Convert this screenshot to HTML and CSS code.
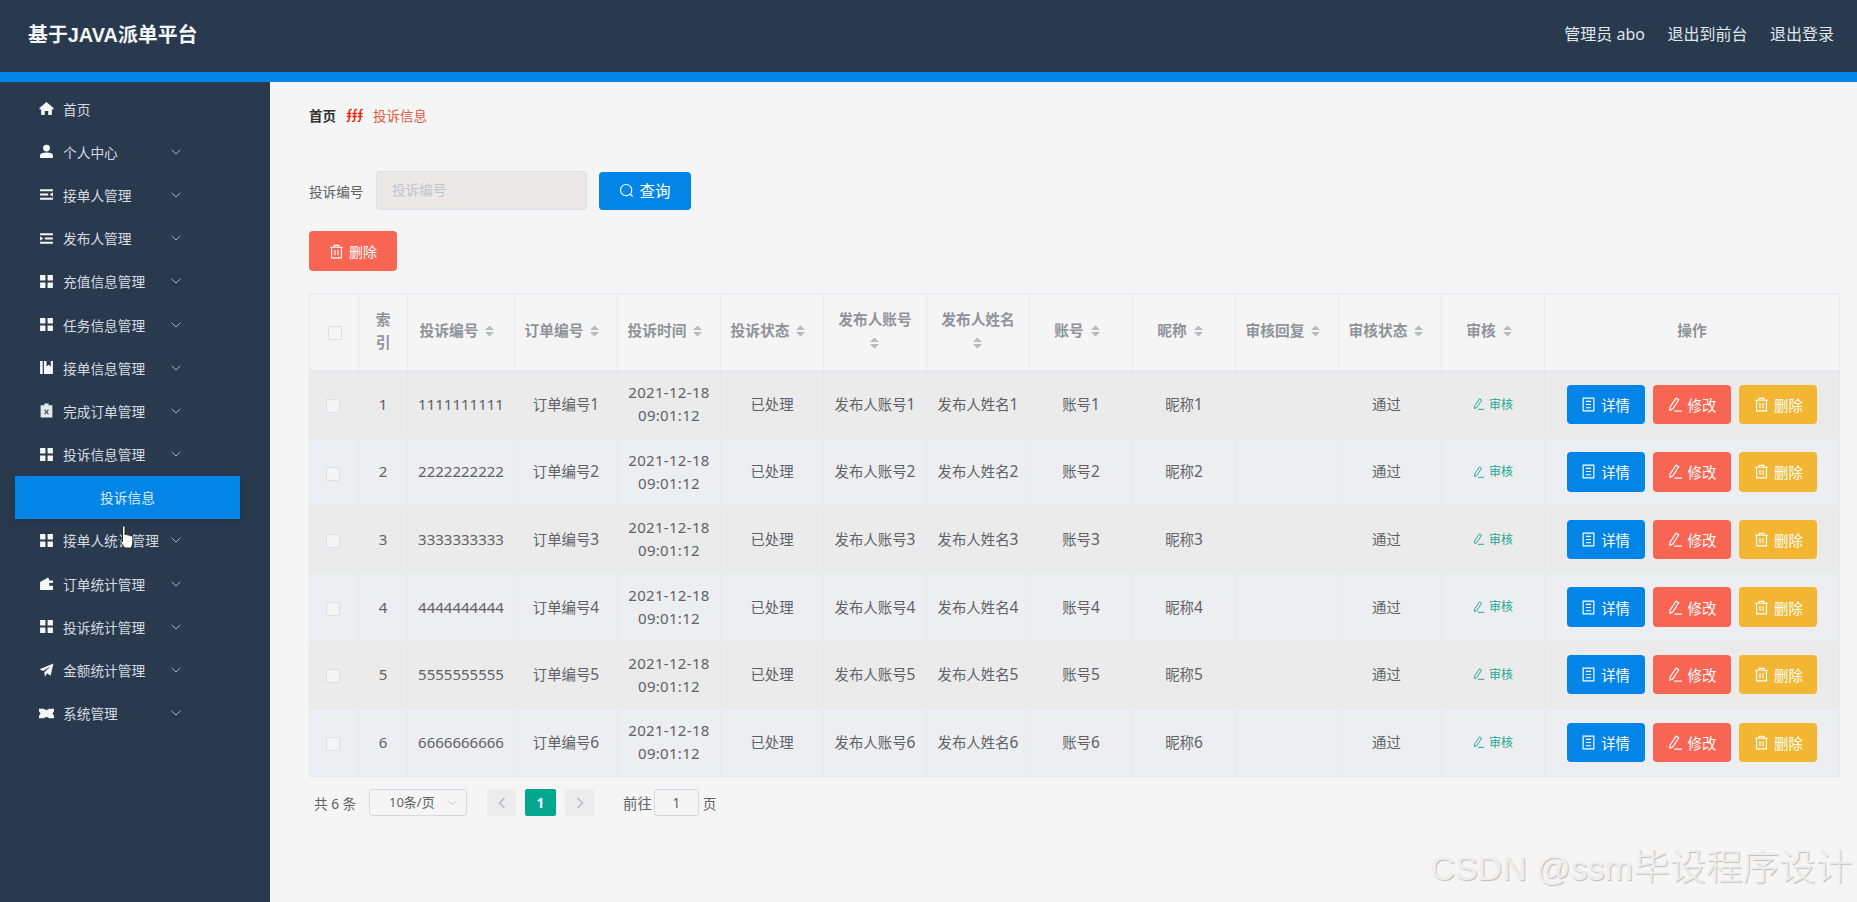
FILE: index.html
```html
<!DOCTYPE html>
<html lang="zh-CN">

<head>
    <meta charset="UTF-8">
    <title>基于JAVA派单平台</title>
    <link rel="stylesheet" href="styles.css">
</head>

<body>
    <svg class="sprites" xmlns="http://www.w3.org/2000/svg">
        <symbol id="i-home" viewBox="0 0 14 14"><path d="M7 1 L13.5 6.6 V8 H12 V13 H8.6 V9.4 H5.4 V13 H2 V8 H0.5 V6.6 Z" fill="currentColor"/></symbol>
        <symbol id="i-user" viewBox="0 0 14 14"><circle cx="7" cy="3.8" r="3.2" fill="currentColor"/><path d="M1 13 V10.6 C1 8.8 3 8 7 8 C11 8 13 8.8 13 10.6 V13 Z" fill="currentColor"/></symbol>
        <symbol id="i-indent" viewBox="0 0 14 14"><path d="M1 2 H13 V4 H1 Z M1 6 H8.6 V8 H1 Z M1 10 H13 V12 H1 Z M13 5 V9 L10 7 Z" fill="currentColor"/></symbol>
        <symbol id="i-outdent" viewBox="0 0 14 14"><path d="M1 2 H13 V4 H1 Z M5.4 6 H13 V8 H5.4 Z M1 10 H13 V12 H1 Z M1 5 V9 L4 7 Z" fill="currentColor"/></symbol>
        <symbol id="i-grid" viewBox="0 0 14 14"><path d="M1 1 H6 V6 H1 Z M8 1 H13 V6 H8 Z M1 8 H6 V13 H1 Z M8 8 H13 V13 H8 Z" fill="currentColor"/></symbol>
        <symbol id="i-book" viewBox="0 0 14 14"><path d="M1 1 H3.5 V13 H1 Z M4.6 1 H7 V6 L9 4.5 L11 6 V1 H13 V13 H4.6 Z" fill="currentColor"/></symbol>
        <symbol id="i-clip" viewBox="0 0 14 14"><path d="M5 0.5 H9 V2 H12.5 V13.5 H1.5 V2 H5 Z" fill="#dfe8ea"/><path d="M5.2 6.2 L8.8 10.4 M8.8 6.2 L5.2 10.4" stroke="#45596b" stroke-width="1.2"/></symbol>
        <symbol id="i-wallet" viewBox="0 0 14 14"><path d="M1 5.5 L8.5 1.5 L10 4.2 H13 V6.6 H9.5 V9 H13 V13 H1 Z" fill="currentColor"/></symbol>
        <symbol id="i-plane" viewBox="0 0 14 14"><path d="M13.5 0.5 L10.8 12 L7.4 9.6 L5.6 13 L5 8.6 L11 3 L3.8 7.4 L0.5 5.8 Z" fill="currentColor"/></symbol>
        <symbol id="i-ticket" viewBox="0 0 14 14"><path d="M0 2.5 H4.4 L7 4 L9.6 2.5 H14 V5 L12.6 7 L14 9 V11.5 H9.6 L7 10 L4.4 11.5 H0 V9 L1.4 7 L0 5 Z" fill="currentColor"/></symbol>
        <symbol id="i-chevron" viewBox="0 0 10 6"><path d="M0.6 0.8 L5 5 L9.4 0.8" fill="none" stroke="currentColor" stroke-width="1"/></symbol>
        <symbol id="i-search" viewBox="0 0 16 16"><circle cx="7.6" cy="7.6" r="6" fill="none" stroke="currentColor" stroke-width="1.2"/><path d="M12 12 L14.6 14.6" stroke="currentColor" stroke-width="1.2"/></symbol>
        <symbol id="i-trash" viewBox="0 0 14 14"><path d="M1 3 H13 M4.8 3 V1.2 H9.2 V3 M2.4 3 V13 H11.6 V3 M5.6 5.5 V10.5 M8.4 5.5 V10.5" fill="none" stroke="currentColor" stroke-width="1.1"/></symbol>
        <symbol id="i-doc" viewBox="0 0 14 14"><path d="M2 1 H12 V13 H2 Z M4.6 4 H9.4 M4.6 7 H9.4 M4.6 10 H9.4" fill="none" stroke="currentColor" stroke-width="1.1"/></symbol>
        <symbol id="i-edit" viewBox="0 0 14 14"><path d="M7.6 1 L10 2.6 L4.6 11 L1.8 12.4 L2 9.2 Z M5.8 13.2 H13" fill="none" stroke="currentColor" stroke-width="1.1"/></symbol>
        <symbol id="i-sort" viewBox="0 0 9 12"><path d="M4.5 0.5 L9 5 H0 Z M0 7 H9 L4.5 11.5 Z" fill="currentColor"/></symbol>
        <symbol id="i-prev" viewBox="0 0 8 12"><path d="M6.5 1 L1.5 6 L6.5 11" fill="none" stroke="currentColor" stroke-width="1.6"/></symbol>
        <symbol id="i-next" viewBox="0 0 8 12"><path d="M1.5 1 L6.5 6 L1.5 11" fill="none" stroke="currentColor" stroke-width="1.6"/></symbol>
    </svg>

    <header class="topbar">
        <div class="brand">基于JAVA派单平台</div>
        <nav class="topnav">
            <span>管理员 abo</span>
            <span>退出到前台</span>
            <span>退出登录</span>
        </nav>
    </header>

    <div class="layout">
        <aside class="sidebar">
            <div class="menu-item"><svg class="menu-icon"><use href="#i-home"/></svg><span>首页</span></div>
            <div class="menu-item"><svg class="menu-icon"><use href="#i-user"/></svg><span>个人中心</span><svg class="chevron"><use href="#i-chevron"/></svg></div>
            <div class="menu-item"><svg class="menu-icon"><use href="#i-indent"/></svg><span>接单人管理</span><svg class="chevron"><use href="#i-chevron"/></svg></div>
            <div class="menu-item"><svg class="menu-icon"><use href="#i-outdent"/></svg><span>发布人管理</span><svg class="chevron"><use href="#i-chevron"/></svg></div>
            <div class="menu-item"><svg class="menu-icon"><use href="#i-grid"/></svg><span>充值信息管理</span><svg class="chevron"><use href="#i-chevron"/></svg></div>
            <div class="menu-item"><svg class="menu-icon"><use href="#i-grid"/></svg><span>任务信息管理</span><svg class="chevron"><use href="#i-chevron"/></svg></div>
            <div class="menu-item"><svg class="menu-icon"><use href="#i-book"/></svg><span>接单信息管理</span><svg class="chevron"><use href="#i-chevron"/></svg></div>
            <div class="menu-item"><svg class="menu-icon"><use href="#i-clip"/></svg><span>完成订单管理</span><svg class="chevron"><use href="#i-chevron"/></svg></div>
            <div class="menu-item"><svg class="menu-icon"><use href="#i-grid"/></svg><span>投诉信息管理</span><svg class="chevron"><use href="#i-chevron"/></svg></div>
            <div class="submenu-item">投诉信息</div>
            <div class="menu-item"><svg class="menu-icon"><use href="#i-grid"/></svg><span>接单人统计管理</span><svg class="chevron"><use href="#i-chevron"/></svg></div>
            <div class="menu-item"><svg class="menu-icon"><use href="#i-wallet"/></svg><span>订单统计管理</span><svg class="chevron"><use href="#i-chevron"/></svg></div>
            <div class="menu-item"><svg class="menu-icon"><use href="#i-grid"/></svg><span>投诉统计管理</span><svg class="chevron"><use href="#i-chevron"/></svg></div>
            <div class="menu-item"><svg class="menu-icon"><use href="#i-plane"/></svg><span>金额统计管理</span><svg class="chevron"><use href="#i-chevron"/></svg></div>
            <div class="menu-item"><svg class="menu-icon"><use href="#i-ticket"/></svg><span>系统管理</span><svg class="chevron"><use href="#i-chevron"/></svg></div>
        </aside>

        <main class="content">
            <div class="breadcrumb">
                <b>首页</b>
                <svg class="crumb-sep" viewBox="0 0 18 15"><path d="M5.6 2 C4.4 0.6 3.2 2 3.2 4 V10 C3.2 12.8 2 14.4 0.8 13 M0.8 5.6 H5.4 M0.8 8.4 H5.4 M11 2 C9.8 0.6 8.6 2 8.6 4 V10 C8.6 12.8 7.4 14.4 6.2 13 M6.2 5.6 H10.8 M6.2 8.4 H10.8 M16.6 2 C15.4 0.6 14.2 2 14.2 4 V10 C14.2 12.8 13 14.4 11.8 13 M11.8 5.6 H16.6 M11.8 8.4 H16.6"/></svg>
                <span class="crumb-current">投诉信息</span>
            </div>

            <div class="search-row">
                <label class="search-label">投诉编号</label>
                <div class="search-input">投诉编号</div>
                <button class="btn btn-search"><svg class="btn-icon"><use href="#i-search"/></svg>查询</button>
            </div>

            <div class="action-row">
                <button class="btn btn-delete-all"><svg class="btn-icon"><use href="#i-trash"/></svg>删除</button>
            </div>

            <table class="grid">
                <colgroup>
                    <col class="col-narrow"><col class="col-narrow"><col class="col-code">
                    <col class="col-std"><col class="col-std"><col class="col-std"><col class="col-std"><col class="col-std">
                    <col class="col-std"><col class="col-std"><col class="col-std"><col class="col-std"><col class="col-std">
                    <col class="col-ops">
                </colgroup>
                <thead>
                    <tr>
                        <th><span class="check"></span></th>
                        <th>索<br>引</th>
                        <th>投诉编号<svg class="sort"><use href="#i-sort"/></svg></th>
                        <th>订单编号<svg class="sort"><use href="#i-sort"/></svg></th>
                        <th>投诉时间<svg class="sort"><use href="#i-sort"/></svg></th>
                        <th>投诉状态<svg class="sort"><use href="#i-sort"/></svg></th>
                        <th>发布人账号<svg class="sort"><use href="#i-sort"/></svg></th>
                        <th>发布人姓名<svg class="sort"><use href="#i-sort"/></svg></th>
                        <th>账号<svg class="sort"><use href="#i-sort"/></svg></th>
                        <th>昵称<svg class="sort"><use href="#i-sort"/></svg></th>
                        <th>审核回复<svg class="sort"><use href="#i-sort"/></svg></th>
                        <th>审核状态<svg class="sort"><use href="#i-sort"/></svg></th>
                        <th>审核<svg class="sort"><use href="#i-sort"/></svg></th>
                        <th>操作</th>
                    </tr>
                </thead>
                <tbody>
                    <tr>
                        <td><span class="check"></span></td><td class="num">1</td><td class="num">1111111111</td><td>订单编号<span class="digit">1</span></td><td class="num date">2021-12-18<br>09:01:12</td><td>已处理</td><td>发布人账号<span class="digit">1</span></td><td>发布人姓名<span class="digit">1</span></td><td>账号<span class="digit">1</span></td><td>昵称<span class="digit">1</span></td><td></td><td class="status">通过</td>
                        <td><span class="review"><svg class="review-icon"><use href="#i-edit"/></svg>审核</span></td>
                        <td><div class="ops"><button class="btn btn-op btn-detail"><svg class="btn-icon"><use href="#i-doc"/></svg>详情</button><button class="btn btn-op btn-edit"><svg class="btn-icon"><use href="#i-edit"/></svg>修改</button><button class="btn btn-op btn-remove"><svg class="btn-icon"><use href="#i-trash"/></svg>删除</button></div></td>
                    </tr>
                    <tr>
                        <td><span class="check"></span></td><td class="num">2</td><td class="num">2222222222</td><td>订单编号<span class="digit">2</span></td><td class="num date">2021-12-18<br>09:01:12</td><td>已处理</td><td>发布人账号<span class="digit">2</span></td><td>发布人姓名<span class="digit">2</span></td><td>账号<span class="digit">2</span></td><td>昵称<span class="digit">2</span></td><td></td><td class="status">通过</td>
                        <td><span class="review"><svg class="review-icon"><use href="#i-edit"/></svg>审核</span></td>
                        <td><div class="ops"><button class="btn btn-op btn-detail"><svg class="btn-icon"><use href="#i-doc"/></svg>详情</button><button class="btn btn-op btn-edit"><svg class="btn-icon"><use href="#i-edit"/></svg>修改</button><button class="btn btn-op btn-remove"><svg class="btn-icon"><use href="#i-trash"/></svg>删除</button></div></td>
                    </tr>
                    <tr>
                        <td><span class="check"></span></td><td class="num">3</td><td class="num">3333333333</td><td>订单编号<span class="digit">3</span></td><td class="num date">2021-12-18<br>09:01:12</td><td>已处理</td><td>发布人账号<span class="digit">3</span></td><td>发布人姓名<span class="digit">3</span></td><td>账号<span class="digit">3</span></td><td>昵称<span class="digit">3</span></td><td></td><td class="status">通过</td>
                        <td><span class="review"><svg class="review-icon"><use href="#i-edit"/></svg>审核</span></td>
                        <td><div class="ops"><button class="btn btn-op btn-detail"><svg class="btn-icon"><use href="#i-doc"/></svg>详情</button><button class="btn btn-op btn-edit"><svg class="btn-icon"><use href="#i-edit"/></svg>修改</button><button class="btn btn-op btn-remove"><svg class="btn-icon"><use href="#i-trash"/></svg>删除</button></div></td>
                    </tr>
                    <tr>
                        <td><span class="check"></span></td><td class="num">4</td><td class="num">4444444444</td><td>订单编号<span class="digit">4</span></td><td class="num date">2021-12-18<br>09:01:12</td><td>已处理</td><td>发布人账号<span class="digit">4</span></td><td>发布人姓名<span class="digit">4</span></td><td>账号<span class="digit">4</span></td><td>昵称<span class="digit">4</span></td><td></td><td class="status">通过</td>
                        <td><span class="review"><svg class="review-icon"><use href="#i-edit"/></svg>审核</span></td>
                        <td><div class="ops"><button class="btn btn-op btn-detail"><svg class="btn-icon"><use href="#i-doc"/></svg>详情</button><button class="btn btn-op btn-edit"><svg class="btn-icon"><use href="#i-edit"/></svg>修改</button><button class="btn btn-op btn-remove"><svg class="btn-icon"><use href="#i-trash"/></svg>删除</button></div></td>
                    </tr>
                    <tr>
                        <td><span class="check"></span></td><td class="num">5</td><td class="num">5555555555</td><td>订单编号<span class="digit">5</span></td><td class="num date">2021-12-18<br>09:01:12</td><td>已处理</td><td>发布人账号<span class="digit">5</span></td><td>发布人姓名<span class="digit">5</span></td><td>账号<span class="digit">5</span></td><td>昵称<span class="digit">5</span></td><td></td><td class="status">通过</td>
                        <td><span class="review"><svg class="review-icon"><use href="#i-edit"/></svg>审核</span></td>
                        <td><div class="ops"><button class="btn btn-op btn-detail"><svg class="btn-icon"><use href="#i-doc"/></svg>详情</button><button class="btn btn-op btn-edit"><svg class="btn-icon"><use href="#i-edit"/></svg>修改</button><button class="btn btn-op btn-remove"><svg class="btn-icon"><use href="#i-trash"/></svg>删除</button></div></td>
                    </tr>
                    <tr>
                        <td><span class="check"></span></td><td class="num">6</td><td class="num">6666666666</td><td>订单编号<span class="digit">6</span></td><td class="num date">2021-12-18<br>09:01:12</td><td>已处理</td><td>发布人账号<span class="digit">6</span></td><td>发布人姓名<span class="digit">6</span></td><td>账号<span class="digit">6</span></td><td>昵称<span class="digit">6</span></td><td></td><td class="status">通过</td>
                        <td><span class="review"><svg class="review-icon"><use href="#i-edit"/></svg>审核</span></td>
                        <td><div class="ops"><button class="btn btn-op btn-detail"><svg class="btn-icon"><use href="#i-doc"/></svg>详情</button><button class="btn btn-op btn-edit"><svg class="btn-icon"><use href="#i-edit"/></svg>修改</button><button class="btn btn-op btn-remove"><svg class="btn-icon"><use href="#i-trash"/></svg>删除</button></div></td>
                    </tr>
                </tbody>
            </table>

            <div class="pager">
                <span class="pager-total">共 6 条</span>
                <div class="pager-size">10条/页<svg class="pager-caret"><use href="#i-chevron"/></svg></div>
                <span class="pager-btn"><svg class="pager-arrow"><use href="#i-prev"/></svg></span>
                <span class="pager-num">1</span>
                <span class="pager-btn"><svg class="pager-arrow"><use href="#i-next"/></svg></span>
                <span class="pager-goto">前往</span>
                <div class="pager-input">1</div>
                <span class="pager-unit">页</span>
            </div>
        </main>
    </div>

    <svg class="hand-cursor" viewBox="0 0 15 24"><path d="M1 14 L3.5 17 V2 C3.5 0.6 6 0.6 6 2 V10 C6.8 9 8.4 9.2 8.8 10.4 C9.6 9.6 10.9 9.8 11.2 10.9 C12.2 10.3 13.6 10.8 13.8 12.2 V18 L12.4 23 H5.6 L1.2 16.4 C0.6 15.4 0.4 14.4 1 14 Z" fill="#fff" stroke="#1c1c1c" stroke-width="0.9"/></svg>
    <div class="watermark">CSDN @ssm<span class="watermark-cjk">毕设程序设计</span></div>
</body>

</html>
```

FILE: styles.css
```css
* {
    box-sizing: border-box;
}

body {
    margin: 0;
    height: 902px;
    overflow: hidden;
    background: #f5f5f5;
    font-family: "Noto Sans", "Noto Sans CJK SC", sans-serif;
    font-size: 14px;
    color: #606266;
}

.sprites {
    display: none;
}

/* top */
.topbar {
    display: flex;
    justify-content: space-between;
    align-items: center;
    height: 82px;
    padding: 0 23px 7px 28px;
    background: #293a4f;
    border-bottom: 10px solid #0385e8;
    color: #dfe6ec;
}

.brand {
    margin-top: 2px;
    font-family: "Liberation Sans", "Noto Sans CJK SC", sans-serif;
    font-size: 19.9px;
    font-weight: 700;
    color: #f5f7f8;
}

.topnav {
    display: flex;
    gap: 22.5px;
    font-size: 16px;
}

/* side menu */
.layout {
    display: flex;
    height: 820px;
}

.sidebar {
    width: 270px;
    flex: none;
    padding-top: 5px;
    background: #293a4f;
    color: #d5dbe0;
    font-size: 13.7px;
}

.menu-item {
    display: flex;
    align-items: center;
    height: 43.2px;
    padding-left: 39px;
}

.menu-icon {
    width: 15px;
    height: 15px;
    margin-right: 9px;
    color: #f4f6f7;
}

.chevron {
    position: absolute;
    left: 171px;
    width: 10px;
    height: 6px;
    color: #a9b3bd;
}

.submenu-item {
    width: 225px;
    height: 43.2px;
    margin-left: 15px;
    line-height: 43px;
    text-align: center;
    background: #0385e8;
    color: #dbeaf6;
    box-shadow: 0 2px 8px rgba(0, 0, 0, 0.15);
}

/* content */
.content {
    flex: 1;
    padding: 0 18px 0 39px;
}

.breadcrumb {
    display: flex;
    align-items: center;
    height: 20px;
    margin-top: 23px;
    font-size: 13.5px;
    color: #303133;
}

.crumb-sep {
    width: 18px;
    height: 15px;
    margin: 0 9px 0 10px;
    fill: none;
    stroke: #e8261a;
    stroke-width: 1.5;
}

.crumb-current {
    color: #dc5b42;
}

.search-row {
    display: flex;
    align-items: center;
    height: 39px;
    margin-top: 46px;
}

.search-label {
    width: 67px;
    font-size: 13.6px;
}

.search-input {
    width: 211px;
    height: 39px;
    padding-left: 15px;
    line-height: 36px;
    font-size: 13.6px;
    color: #c0c4cc;
    background: #ece8e8;
    border: 1px solid #dcdfe6;
    border-radius: 4px;
}

.btn {
    display: inline-flex;
    justify-content: center;
    align-items: center;
    padding: 0;
    font-family: inherit;
    color: #fff;
    border: 0;
    border-radius: 4px;
}

.btn-icon {
    width: 15px;
    height: 15px;
    margin-right: 5px;
}

.btn-search {
    align-self: flex-end;
    width: 92px;
    height: 38px;
    margin-left: 12px;
    padding-bottom: 2px;
    font-size: 15.5px;
    background: #0385e8;
}

.action-row {
    margin-top: 21px;
}

.btn-delete-all {
    width: 88px;
    height: 40px;
    font-size: 14px;
    background: #f86553;
}

/* table */
.grid {
    width: 1530px;
    margin-top: 22px;
    table-layout: fixed;
    border-collapse: collapse;
    text-align: center;
}

.col-narrow {
    width: 49px;
}

.col-code {
    width: 107px;
}

.col-std {
    width: 103px;
}

.col-ops {
    width: 295px;
}

.grid th,
.grid td {
    padding: 0 8px;
    border: 1px solid #e6e8ee;
}

.grid th {
    height: 77px;
    padding-bottom: 3px;
    font-weight: 700;
    font-size: 14.7px;
    line-height: 23px;
    color: #909399;
    background: #f5f5f5;
}

.grid th:first-child {
    padding-left: 9px;
    padding-bottom: 0;
}

.grid td {
    height: 67.6px;
    font-size: 14.4px;
    line-height: 23px;
}

.grid td:first-child {
    padding-right: 10px;
}

.grid tbody tr:nth-child(odd) td {
    background: #ebebeb;
}

.grid tbody tr:nth-child(even) td {
    background: #eceef2;
}

.grid .num {
    padding: 0 2px;
    font-size: 15px;
}

.grid .date {
    font-size: 15px;
    letter-spacing: 0.3px;
}

.digit {
    font-size: 15.5px;
}

.grid .status {
    padding-right: 15px;
}

.sort {
    width: 9px;
    height: 12px;
    margin: 0 8px 0 7px;
    vertical-align: -1px;
    color: #b6b9bf;
}

.check {
    display: inline-block;
    width: 14px;
    height: 14px;
    vertical-align: middle;
    background: #f5f5f5;
    border: 1px solid #dcdfe6;
    border-radius: 2px;
}

.review {
    display: inline-flex;
    align-items: center;
    font-size: 12px;
    color: #1fa78c;
}

.review-icon {
    width: 12px;
    height: 12px;
    margin-right: 4px;
}

.ops {
    display: flex;
    justify-content: center;
    gap: 8.4px;
}

.btn-op {
    width: 78px;
    height: 39.5px;
    font-size: 14.4px;
}

.btn-detail {
    background: #0385e8;
}

.btn-edit {
    background: #f86553;
}

.btn-remove {
    background: #f2b632;
}

/* pager */
.pager {
    display: flex;
    align-items: center;
    height: 28px;
    margin-top: 12px;
    padding-left: 5px;
    font-size: 13.6px;
}

.pager-total {
    width: 55px;
}

.pager-size {
    position: relative;
    width: 98px;
    height: 27px;
    margin-right: 20px;
    padding-left: 19px;
    font-size: 13px;
    line-height: 25px;
    background: #f5f5f5;
    border: 1px solid #d6d9df;
    border-radius: 3px;
}

.pager-caret {
    position: absolute;
    top: 10px;
    right: 9px;
    width: 9px;
    height: 6px;
    color: #c0c4cc;
}

.pager-btn {
    display: flex;
    justify-content: center;
    align-items: center;
    width: 29px;
    height: 27px;
    background: #ececec;
    border-radius: 2px;
    color: #b8bbc1;
}

.pager-arrow {
    width: 8px;
    height: 12px;
}

.pager-num {
    width: 31px;
    height: 27px;
    margin: 0 9px;
    line-height: 27px;
    text-align: center;
    font-weight: 700;
    color: #fff;
    background: #00a78e;
    border-radius: 2px;
}

.pager-goto {
    margin-left: 29px;
    font-size: 14.4px;
}

.pager-input {
    width: 45px;
    height: 27px;
    margin: 0 4px 0 2px;
    line-height: 25px;
    text-align: center;
    background: #f5f5f5;
    border: 1px solid #d6d9df;
    border-radius: 3px;
}

/* things lying on top */
.hand-cursor {
    position: absolute;
    left: 119px;
    top: 525px;
    width: 15px;
    height: 24px;
}

.watermark {
    position: absolute;
    right: 5px;
    top: 845px;
    font-family: "Liberation Sans", "Noto Sans CJK SC", sans-serif;
    font-size: 34px;
    line-height: 46px;
    white-space: nowrap;
    color: #eeeeee;
    text-shadow: 1px 1px 1px #bdbdbd;
}

.watermark-cjk {
    font-size: 36.5px;
    font-weight: 300;
}
```
